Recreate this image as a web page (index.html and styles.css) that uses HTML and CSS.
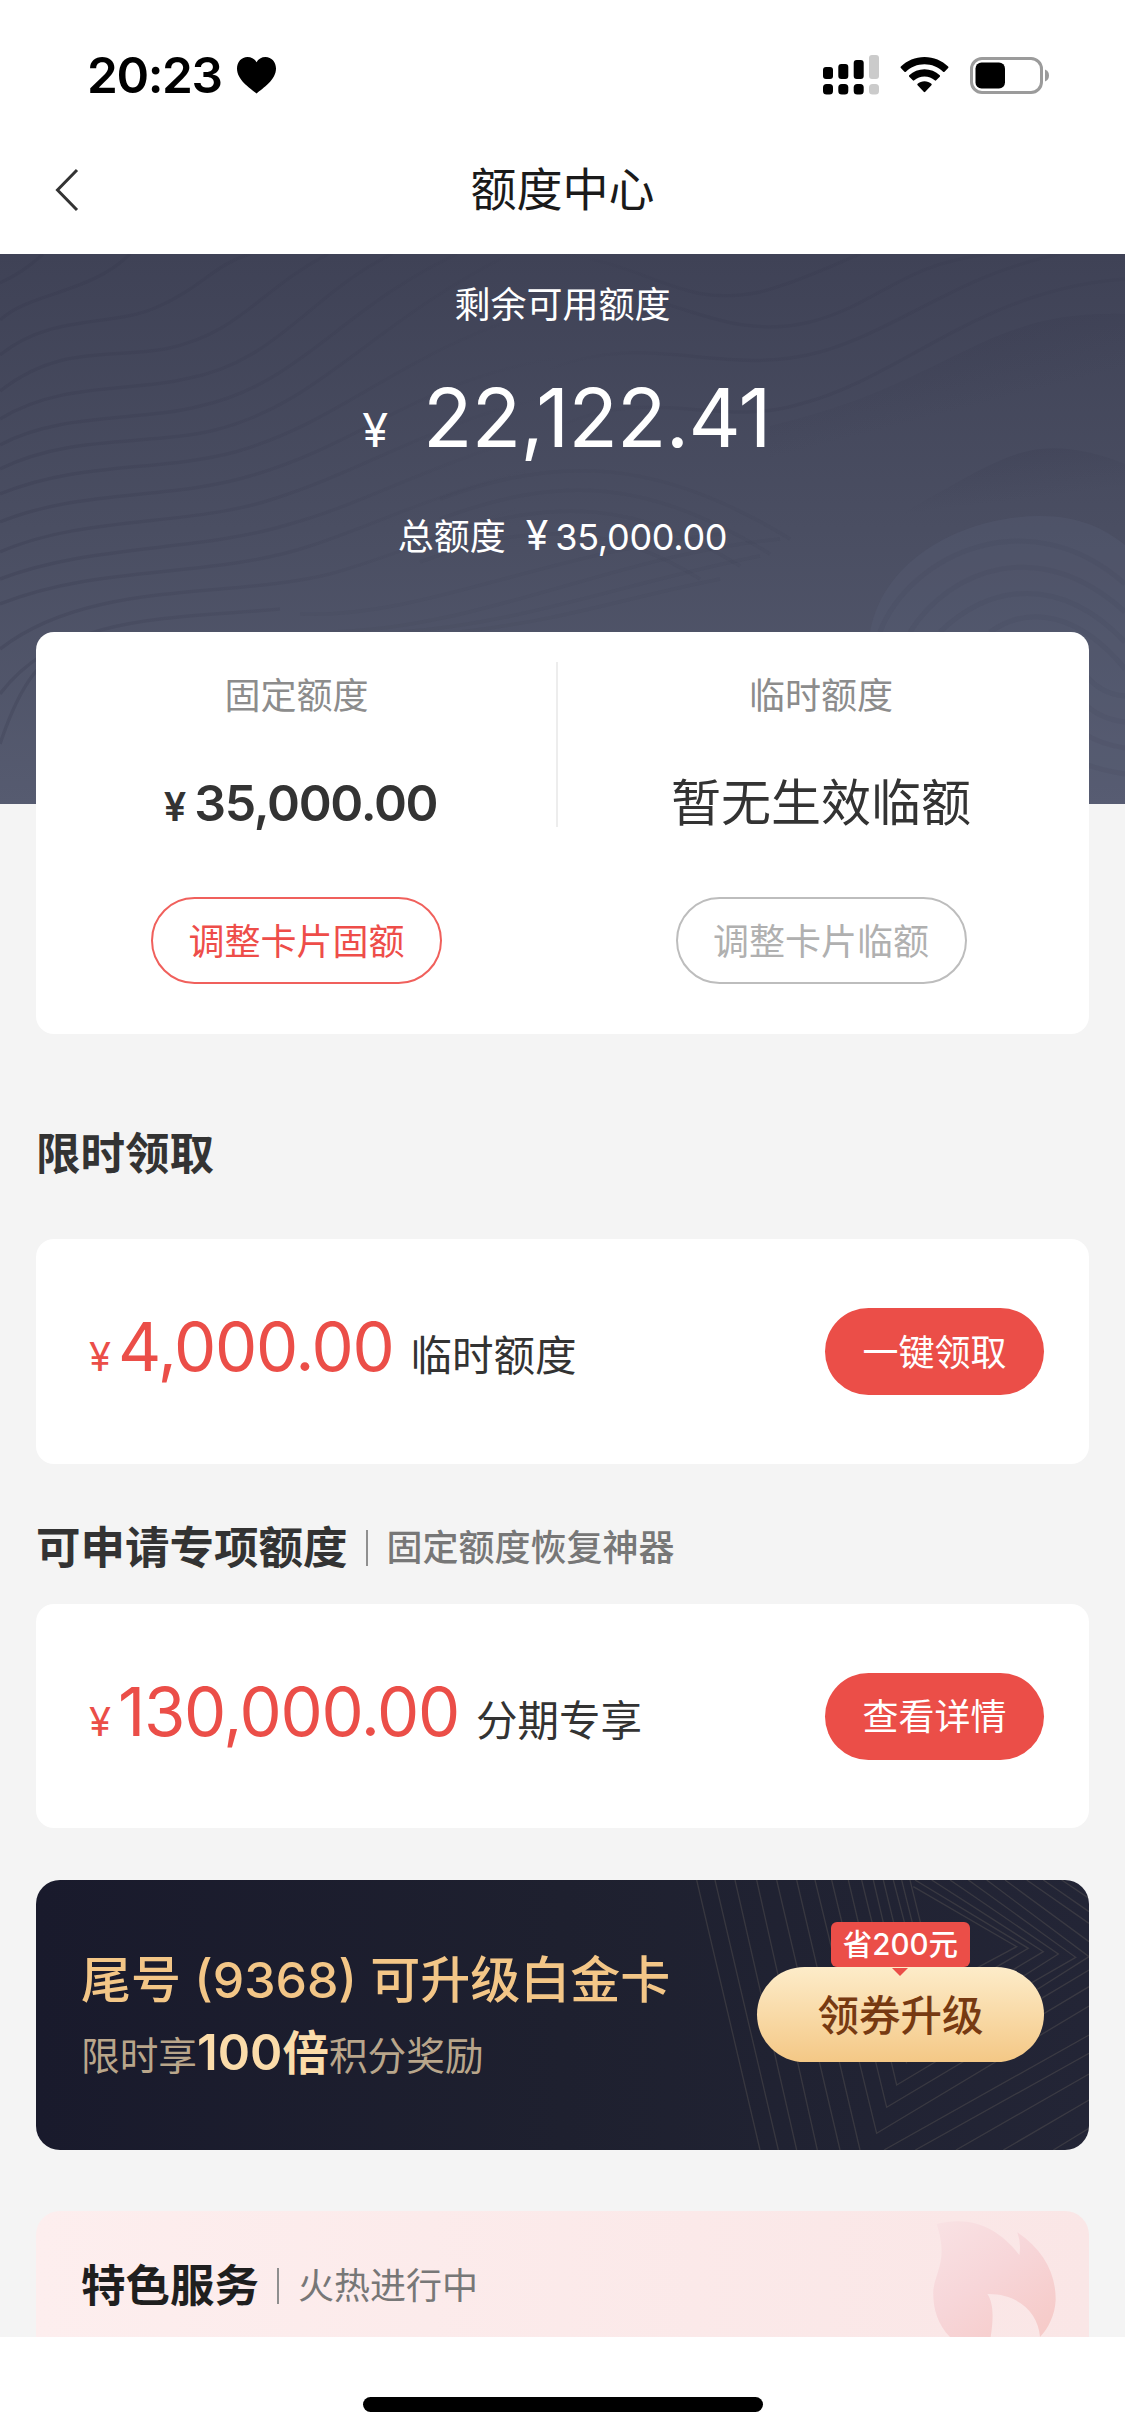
FILE: index.html
```html
<!DOCTYPE html>
<html lang="zh-CN">
<head>
<meta charset="utf-8">
<title>额度中心</title>
<link rel="stylesheet" href="styles.css">
</head>
<body>
<header class="status">
  <span class="clock">20:23</span>
  <svg class="heart" width="39" height="37" viewBox="0 0 39 37"><path d="M19.5 36.5C13 31 0 23 0 11.500C0 5 4.500 0 10.500 0c4 0 7.200 2 9 5.200C21.300 2 24.500 0 28.500 0 34.500 0 39 5 39 11.500 39 23 26 31 19.500 36.500z"/></svg>
  <svg class="signal" width="56" height="40" viewBox="0 0 56 40">
    <rect x="0" y="12" width="10" height="12" rx="3"/><rect x="15.300" y="9" width="10" height="15" rx="3"/><rect x="30.700" y="5" width="10" height="19" rx="3"/><rect class="faint" x="46" y="0" width="10" height="24" rx="3"/>
    <rect x="0" y="29" width="10" height="10.500" rx="3.500"/><rect x="15.300" y="29" width="10" height="10.500" rx="3.500"/><rect x="30.700" y="29" width="10" height="10.500" rx="3.500"/><rect class="faint" x="46" y="29" width="10" height="10.500" rx="3.500"/>
  </svg>
  <svg class="wifi" width="49" height="36" viewBox="0 0 50 37">
    <path d="M25 0C34.500 0 43 3.700 49.300 9.800c.5.500.5 1 0 1.500l-3.700 3.800c-.5.500-1 .5-1.500 0C39 10.300 32.300 7.500 25 7.500S11 10.300 5.900 15.100c-.5.500-1 .5-1.500 0L.7 11.300c-.5-.5-.5-1 0-1.500C7 3.700 15.500 0 25 0z"/>
    <path d="M25 12.500c6 0 11.500 2.300 15.700 6.200.5.500.5 1 0 1.500L37 24c-.5.500-1 .5-1.500 0-2.800-2.500-6.500-4-10.500-4s-7.700 1.500-10.500 4c-.5.500-1 .5-1.500 0l-3.700-3.800c-.5-.5-.5-1 0-1.500C13.500 14.800 19 12.500 25 12.500z"/>
    <path d="M25 25c2.700 0 5.200 1 7.100 2.600.5.500.5 1 0 1.500l-6.300 6.700c-.5.500-1.100.5-1.600 0l-6.300-6.700c-.5-.5-.5-1 0-1.500C19.800 26 22.300 25 25 25z"/>
  </svg>
  <svg class="battery" width="79" height="37" viewBox="0 0 79 37">
    <rect x="1.500" y="1.500" width="70" height="34" rx="10.500" fill="none" stroke="#9b9b9b" stroke-width="3"/>
    <rect x="5.500" y="5.500" width="29.500" height="26" rx="6"/>
    <path d="M75 12.500c2.700 1 4 3.200 4 6s-1.300 5-4 6z" fill="#9b9b9b"/>
  </svg>
</header>
<nav class="nav">
  <svg class="back" width="24" height="44" viewBox="0 0 24 44"><path d="M22 2 2.500 22 22 42" fill="none" stroke="#333" stroke-width="3"/></svg>
  <h1 class="nav-title">额度中心</h1>
</nav>
<main class="page">
  <svg class="waves" width="1125" height="550" viewBox="0 0 1125 550">
    <defs>
      <linearGradient id="base" x1="0" y1="0" x2="0" y2="1"><stop offset="0" stop-color="#3f4256"/><stop offset=".5" stop-color="#4a4e62"/><stop offset="1" stop-color="#565b70"/></linearGradient>
      <linearGradient id="band" x1="0" y1="0" x2=".35" y2="1"><stop offset="0" stop-color="#34364b" stop-opacity=".4"/><stop offset=".5" stop-color="#34364b" stop-opacity="0"/></linearGradient>
      <linearGradient id="fade" gradientUnits="userSpaceOnUse" x1="100" y1="0" x2="560" y2="120"><stop offset="0" stop-color="#34364b" stop-opacity=".26"/><stop offset=".55" stop-color="#34364b" stop-opacity=".16"/><stop offset="1" stop-color="#34364b" stop-opacity="0"/></linearGradient>
      <linearGradient id="rise" gradientUnits="userSpaceOnUse" x1="540" y1="0" x2="1125" y2="0"><stop offset="0" stop-color="#34364b" stop-opacity="0"/><stop offset=".3" stop-color="#34364b" stop-opacity=".22"/><stop offset="1" stop-color="#34364b" stop-opacity=".15"/></linearGradient>
    </defs>
    <rect width="1125" height="550" fill="url(#base)"/>
    <path fill="url(#band)" d="M770 172C860 150 900 128 950 104C1010 74 1050 58 1125 60V210C1070 190 1040 190 990 215C900 260 850 290 770 320z"/>
    <path fill="url(#band)" d="M614 347C720 330 790 312 850 285C930 250 990 200 1040 195C1070 192 1100 200 1125 210V291C1100 268 1070 258 1040 260C970 268 880 290 868 378H614z"/>
    <path fill="#5a6076" fill-opacity=".3" d="M868 400C868 310 960 262 1040 262C1080 262 1105 275 1125 291V550H1050L868 400z"/>
    <g class="ripples left">
      <path d="M0 29Q24 18 43 0"/>
      <path d="M0 66C30 38 90 40 130 0"/>
      <path d="M0 101C50 60 110 73 155 54C200 35 215 10 250 0"/>
      <path d="M0 137C60 90 110 105 165 95C240 80 260 35 328 0"/>
      <path d="M0 165C60 128 130 138 185 125C275 110 310 40 392 0"/>
      <path d="M0 191C60 158 140 168 200 152C300 130 340 55 457 0"/>
      <path d="M0 215C70 180 150 192 215 176C320 150 370 70 510 0"/>
      <path d="M0 240C80 207 160 218 235 198C350 165 400 95 560 50"/>
      <path d="M0 268C80 235 170 246 250 222C370 188 430 115 590 100"/>
      <path d="M0 298C80 262 190 272 270 246C380 212 460 150 600 135"/>
      <path d="M0 325C90 290 200 298 290 270C390 242 460 190 600 170"/>
      <path d="M0 350C100 310 210 325 310 292C400 262 450 230 600 200"/>
      <path d="M0 395C90 325 230 345 330 320C420 295 480 260 600 232"/>
      <path d="M0 440C60 360 170 365 280 355"/>
      <path d="M0 490C20 430 40 400 90 380"/>
    </g>
    <g class="ripples right">
      <path d="M560 0C650 10 680 55 760 38C800 28 840 8 860 0"/>
      <path d="M540 60C640 0 700 95 810 68C880 50 900 10 990 0"/>
      <path d="M550 115C650 75 720 125 820 98C900 75 960 20 1060 0"/>
      <path d="M560 172C650 130 720 175 800 150C900 125 980 35 1125 25"/>
    </g>
    <g class="ripples fine">
      <path d="M440 245C560 200 660 205 790 285"/><path d="M440 265C560 220 650 225 770 300"/><path d="M430 285C560 240 640 250 740 312"/><path d="M420 308C540 262 620 275 700 325"/>
      <path d="M330 378C480 375 620 300 780 285"/><path d="M400 378C520 370 620 330 760 302"/><path d="M460 378C570 365 620 345 720 325"/><path d="M300 360C420 365 540 300 720 280"/>
    </g>
    <g class="ripples knoll">
      <path d="M880 378C910 300 1030 245 1125 330"/><path d="M910 378C950 315 1040 280 1125 358"/><path d="M940 378C990 330 1060 320 1125 388"/><path d="M990 378C1030 350 1080 360 1125 415"/>
      <path d="M1085 420Q1100 440 1125 442M1085 450Q1100 465 1125 468M1085 480Q1100 490 1125 494M1085 510Q1100 516 1125 520"/>
    </g>
  </svg>
  <section class="hero">
    <p class="hero-label">剩余可用额度</p>
    <p class="hero-amount"><span class="yen">¥</span><span class="num">22,122.41</span></p>
    <p class="hero-total"><span>总额度</span><span class="yen">¥</span><span class="num">35,000.00</span></p>
  </section>
  <section class="limits card">
    <div class="limit">
      <h2 class="limit-label">固定额度</h2>
      <p class="limit-value"><span class="yen">¥</span><span class="num">35,000.00</span></p>
      <button class="outline">调整卡片固额</button>
    </div>
    <i class="split"></i>
    <div class="limit second">
      <h2 class="limit-label">临时额度</h2>
      <p class="limit-value">暂无生效临额</p>
      <button class="outline muted">调整卡片临额</button>
    </div>
  </section>

  <h2 class="heading first">限时领取</h2>
  <section class="offer card">
    <p class="offer-text"><span class="yen">¥</span><span class="num">4,000.00</span><span class="kind">临时额度</span></p>
    <button class="solid">一键领取</button>
  </section>

  <h2 class="heading">可申请专项额度<i class="bar"></i><small class="note strong">固定额度恢复神器</small></h2>
  <section class="offer special card">
    <p class="offer-text"><span class="yen">¥</span><span class="num">130,000.00</span><span class="kind">分期专享</span></p>
    <button class="solid">查看详情</button>
  </section>

  <section class="banner">
    <svg class="rays" width="409" height="270" viewBox="0 30 1227 810">
      <path d="M50 30 240 840M105 30 295 840M165 30 350 840M230 30 412 840M290 30 480 840M350 30 540 840M405 30 590 790 1227 408M455 30 620 712 1227 350M505 30 650 645 1227 300M545 30 680 580M580 30 700 540M610 30 700 400M640 30 690 220M665 30 700 170M690 30 722 160"/>
      <path d="M612 840 1227 495M706 840 1227 550M828 840 1227 612M970 840 1227 690M1120 840 1227 775"/>
      <path d="M700 50 1010 230 860 310M705 30 1045 235 900 320M755 30 1090 245 940 335M810 30 1135 252 980 350M865 30 1187 262 1000 370M920 30 1227 260 1050 372M975 30 1227 215M1040 30 1227 160M1090 30 1227 125M1145 30 1227 85"/>
    </svg>
    <div class="banner-text">
      <h2 class="banner-title">尾号 (9368) 可升级白金卡</h2>
      <p class="banner-sub">限时享<b><span class="hundred">100</span>倍</b>积分奖励</p>
    </div>
    <button class="gold">领券升级<span class="tag">省200元</span></button>
  </section>

  <section class="services">
    <svg class="flame" width="189" height="126" viewBox="0 33 567 378">
      <defs><linearGradient id="fire" x1="0" y1="0" x2=".8" y2="1"><stop offset="0" stop-color="#f9e2e4"/><stop offset=".5" stop-color="#f7d6d9"/><stop offset="1" stop-color="#f6cbc9"/></linearGradient></defs>
      <path fill="url(#fire)" d="M110 72C220 45 300 90 358 165Q364 130 352 97C430 150 468 220 467 300C465 345 445 385 420 411C415 335 350 280 262 282C282 310 280 360 272 411H150C110 370 98 320 100 270C108 210 145 180 110 72z"/>
    </svg>
    <h2 class="heading dark">特色服务<i class="bar"></i><small class="note">火热进行中</small></h2>
  </section>
</main>
<footer class="home"><i class="indicator"></i></footer>
</body>
</html>
```

FILE: styles.css
```css
* { box-sizing: border-box; margin: 0; padding: 0; }
body {
  width: 1125px;
  background: #fff;
  color: #333;
  font-family: Inter, "Noto Sans CJK SC", sans-serif;
}
h1, h2, small { font-weight: 400; }
button { font-family: inherit; border: 0; padding: 0 0 4px; }
span, small, b { white-space: nowrap; }
i { display: block; }

.status { display: flex; align-items: center; height: 126px; padding: 24px 76px 0 87px; }
.clock { font-size: 49.500px; font-weight: 600; line-height: 60px; color: #000; width: 150px; letter-spacing: -1.4px; }
.signal { margin-left: auto; }
.faint { fill: #cbcbcb; }
.wifi { margin-left: 21px; }
.battery { margin-left: 21px; }

.nav { display: grid; grid-template-columns: 80px 1fr 80px; align-items: center; height: 128px; }
.back { margin-left: 55px; }
.nav-title { font-size: 46px; line-height: 60px; color: #1a1a1a; text-align: center; margin-top: -2px; }

.page { position: relative; height: 2083px; overflow: hidden; padding: 0 36px; background: #f4f4f4; }
.waves { position: absolute; top: 0; left: 0; }
.ripples { fill: none; stroke: #34364b; stroke-width: 3.5; }
.left { stroke: url(#fade); }
.right { stroke: url(#rise); }
.fine { stroke-opacity: .06; }
.knoll { stroke-opacity: .09; stroke-width: 5; }

.hero { position: relative; height: 378px; padding-top: 26px; color: #fff; display: flex; flex-direction: column; align-items: center; }
.hero-label { font-size: 36px; line-height: 50px; }
.hero-amount { display: flex; align-items: baseline; height: 100px; margin: 38px 0 0 8px; line-height: 100px; }
.hero-amount .yen { font-size: 47px; font-weight: 400; margin-right: 35px; line-height: 1; }
.hero-amount .num { font-size: 81px; letter-spacing: -.7px; }
.hero-total { display: flex; align-items: baseline; height: 50px; margin-top: 44px; font-size: 36px; line-height: 50px; }
.hero-total .yen { font-size: 41px; font-weight: 400; margin: 0 7px 0 20px; line-height: 1; }
.hero-total .num { font-weight: 400; letter-spacing: -.3px; }

.card { position: relative; background: #fff; border-radius: 18px; }
.limits { display: grid; grid-template-columns: 520px 2px 1fr; height: 402px; padding-right: 6px; }
.split { height: 165px; margin-top: 30px; background: #ededed; }
.limit { display: flex; flex-direction: column; align-items: center; padding: 44px 0 0 1px; }
.limit-label { font-size: 36px; line-height: 40px; color: #8c8c8c; }
.limit-value { display: flex; align-items: baseline; height: 60px; margin-top: 57px; font-size: 50px; line-height: 60px; }
.limit-value .yen { font-size: 40px; margin-right: 8px; font-weight: 600; line-height: 1; }
.limit-value .num { font-weight: 600; letter-spacing: -1.3px; margin-right: -8px; }
.outline { width: 291px; height: 87px; margin-top: 64px; border: 2px solid #f0605c; border-radius: 44px; background: none; font-size: 36px; color: #ee4d49; }
.outline.muted { border-color: #bdbdbd; color: #b0b0b0; }

.heading { display: flex; align-items: center; height: 60px; margin-top: 54px; font-size: 44.500px; font-weight: 600; line-height: 60px; }
.heading.first { margin-top: 90px; }
.bar { width: 2px; height: 36px; margin: 0 19px 0 18px; background: #8f8f8f; }
.note { font-size: 36px; color: #777; }
.note.strong { font-weight: 500; }

.offer { display: flex; align-items: center; justify-content: space-between; height: 225px; margin-top: 55px; padding: 0 45px 0 53px; }
.offer.special { height: 224px; margin-top: 26px; }
.offer-text { display: flex; align-items: baseline; height: 80px; margin-top: -9px; line-height: 80px; color: #eb4e48; }
.offer-text .yen { font-size: 40px; font-weight: 400; margin-right: 7px; line-height: 1; }
.offer-text .num { font-size: 67px; font-weight: 400; letter-spacing: -1.3px; }
.kind { margin-left: 17px; font-size: 41.500px; line-height: 1; color: #333; }
.solid { width: 219px; height: 87px; border-radius: 44px; background: #eb4e48; color: #fff; font-size: 36px; }

.banner { position: relative; display: flex; justify-content: space-between; height: 270px; margin-top: 52px; padding: 0 45px; border-radius: 24px; overflow: hidden; background: linear-gradient(90deg, #191a2c, #1e202f 50%, #232536); }
.rays { position: absolute; top: 0; right: 0; fill: none; stroke: #8d8272; stroke-opacity: .22; stroke-width: 4; }
.banner-text { padding-top: 70px; }
.banner-title { font-size: 50px; font-weight: 500; line-height: 60px; color: #f3c687; white-space: nowrap; }
.banner-sub { margin-top: 13px; font-size: 38.700px; line-height: 60px; color: #b9a68b; }
.banner-sub b { font-size: 46.500px; font-weight: 600; color: #fbdcaa; }
.hundred { font-size: 49px; }
.gold { position: relative; width: 287px; height: 95px; margin-top: 87px; border-radius: 48px; background: linear-gradient(#fdecc9, #f4c886); color: #773a12; font-size: 41.500px; font-weight: 500; }
.tag { position: absolute; left: 74px; top: -45px; width: 139px; height: 45px; border-radius: 6px; background: #eb4e48; color: #fff; font-size: 29.500px; line-height: 45px; }
.tag::after { content: ""; position: absolute; left: 61px; top: 46px; border: 8.500px solid transparent; border-top-color: #eb4e48; border-bottom: 0; }

.services { position: relative; height: 200px; margin-top: 61px; padding: 45px 45px; border-radius: 24px; background: linear-gradient(90deg, #fdeeee, #fae6e6); }
.services .heading { position: relative; margin: 0; }
.heading.dark { color: #1f1f1f; }
.flame { position: absolute; top: 0; right: 0; }

.home { display: flex; justify-content: center; height: 98px; padding-top: 60px; }
.indicator { width: 400px; height: 15px; border-radius: 8px; background: #000; }
```
